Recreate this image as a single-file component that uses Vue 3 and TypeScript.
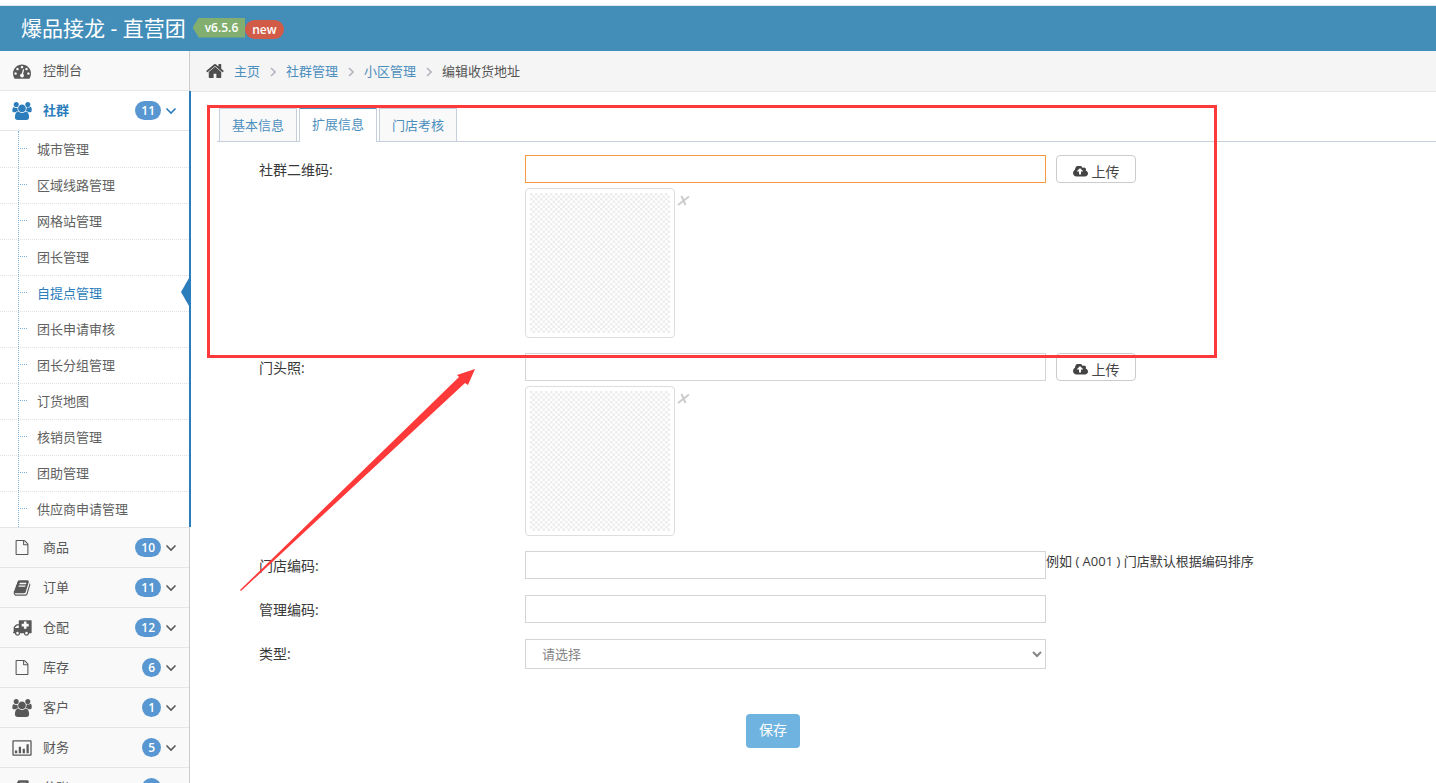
<script setup lang="ts">
import { ref } from 'vue'

interface Icon {
  box: string
  d: string
}

interface MenuItem {
  label: string
  icon: keyof typeof icons
  count?: number
  children?: string[]
}

interface Field {
  id: string
  label: string
  kind: 'upload' | 'text' | 'select'
  hint?: string
}

const icons = {
  gauge: {
    box: '0 0 1792 1792',
    d: 'M384 1152q0-53-37.5-90.5t-90.5-37.5-90.5 37.5-37.5 90.5 37.5 90.5 90.5 37.5 90.5-37.5 37.5-90.5zm192-448q0-53-37.5-90.5t-90.5-37.5-90.5 37.5-37.5 90.5 37.5 90.5 90.5 37.5 90.5-37.5 37.5-90.5zm428 481l101-382q6-26-7.5-48.5t-38.5-29.5-48 6.5-30 39.5l-101 382q-60 5-107 43.5t-63 98.5q-20 77 20 146t117 89 146-20 89-117q16-60-6-117t-72-91zm660-33q0-53-37.5-90.5t-90.5-37.5-90.5 37.5-37.5 90.5 37.5 90.5 90.5 37.5 90.5-37.5 37.5-90.5zm-640-640q0-53-37.5-90.5t-90.5-37.5-90.5 37.5-37.5 90.5 37.5 90.5 90.5 37.5 90.5-37.5 37.5-90.5zm448 192q0-53-37.5-90.5t-90.5-37.5-90.5 37.5-37.5 90.5 37.5 90.5 90.5 37.5 90.5-37.5 37.5-90.5zm320 448q0 261-141 483-19 29-54 29h-1402q-35 0-54-29-141-221-141-483 0-182 71-348t191-286 286-191 348-71 348 71 286 191 191 286 71 348z',
  },
  users: {
    box: '-64 0 1920 1792',
    d: 'M529 896q-162 5-265 128h-134q-82 0-138-40.5t-56-118.5q0-353 124-353 6 0 43.5 21t97.5 42.5 119 21.5q67 0 133-23-5 37-5 66 0 159 93 294zm1071 637q0 120-73 189.5t-194 69.5h-874q-121 0-194-69.5t-73-189.5q0-53 3.5-103.5t14-109 26.5-108.5 43-97.5 62-81 85.5-53.5 111.5-20q10 0 43 21.5t73 48 107 48 135 21.5 135-21.5 107-48 73-48 43-21.5q61 0 111.5 20t85.5 53.5 62 81 43 97.5 26.5 108.5 14 109 3.5 103.5zm-1024-1277q0 106-75 181t-181 75-181-75-75-181 75-181 181-75 181 75 75 181zm704 384q0 159-112.5 271.5t-271.5 112.5-271.5-112.5-112.5-271.5 112.5-271.5 271.5-112.5 271.5 112.5 112.5 271.5zm576 225q0 78-56 118.5t-138 40.5h-134q-103-123-265-128 93-135 93-294 0-29-5-66 66 23 133 23 59 0 119-21.5t97.5-42.5 43.5-21q124 0 124 353zm-128-609q0 106-75 181t-181 75-181-75-75-181 75-181 181-75 181 75 75 181z',
  },
  file: {
    box: '0 0 1792 1792',
    d: 'M1596 380q28 28 48 76t20 88v1152q0 40-28 68t-68 28h-1344q-40 0-68-28t-28-68v-1600q0-40 28-68t68-28h896q40 0 88 20t76 48zm-444-244v376h376q-10-29-22-41l-313-313q-12-12-41-22zm384 1528v-1024h-416q-40 0-68-28t-28-68v-416h-768v1536h1280z',
  },
  book: {
    box: '0 0 1792 1792',
    d: 'M1703 478q40 57 18 129l-275 906q-19 64-76.5 107.5t-122.5 43.5h-923q-77 0-148.5-53.5t-99.5-131.5q-24-67-2-127 0-4 3-27t4-37q1-8-3-21.5t-3-19.5q2-11 8-21t16.5-23.5 16.5-23.5q23-38 45-91.5t30-91.5q3-10 .5-30t-.5-28q3-11 17-28t17-23q21-36 42-92t25-90q1-9-2.5-32t.5-28q4-13 22-30.5t22-22.5q19-26 42.5-84.5t27.5-96.5q1-8-3-25.5t-2-26.5q2-8 9-18t18-23 17-21q8-12 16.5-30.5t15-35 16-36 19.5-32 26.5-23.5 36-11.5 47.5 5.5l-1 3q38-9 51-9h761q74 0 114 56t18 130l-274 906q-36 119-71.5 153.5t-128.5 34.5h-869q-27 0-38 15-11 16-1 43 24 70 144 70h923q29 0 56-15.5t35-41.5l300-987q7-22 5-57 38 15 59 43zm-1064 2q-4 13 2 22.5t20 9.5h608q13 0 25.5-9.5t16.5-22.5l21-64q4-13-2-22.5t-20-9.5h-608q-13 0-25.5 9.5t-16.5 22.5zm-83 256q-4 13 2 22.5t20 9.5h608q13 0 25.5-9.5t16.5-22.5l21-64q4-13-2-22.5t-20-9.5h-608q-13 0-25.5 9.5t-16.5 22.5z',
  },
  ambulance: {
    box: '0 0 1920 1792',
    d: 'M1920 192v1152q0 26-19 45t-45 19h-192q0 106-75 181t-181 75-181-75-75-181h-384q0 106-75 181t-181 75-181-75-75-181h-128q-26 0-45-19t-19-45 19-45 45-19v-416q0-26 13-58t32-51l198-198q19-19 51-32t58-13h160v-320q0-26 19-45t45-19h1152q26 0 45 19t19 45zM640 1408a128 128 0 1 0-256 0a128 128 0 1 0 256 0zM1536 1408a128 128 0 1 0-256 0a128 128 0 1 0 256 0zM256 896h384v-256h-158q-14 2-22 9l-195 195q-7 12-9 22zM1408 256h-256v224h-224v256h224v224h256v-224h224v-256h-224z',
  },
  chart: {
    box: '0 0 1920 1792',
    d: 'M96 128h1728q96 0 96 96v1344q0 96-96 96h-1728q-96 0-96-96v-1344q0-96 96-96zM128 256v1280h1664v-1280zM256 1152h224v256h-224zM640 768h224v640h-224zM1024 960h224v448h-224zM1408 512h224v896h-224z',
  },
  home: {
    box: '64 192 1664 1408',
    d: 'M1472 992v480q0 26-19 45t-45 19h-384v-384h-256v384h-384q-26 0-45-19t-19-45v-480q0-1 .5-3t.5-3l575-474 575 474q1 2 1 6zm223-69l-62 74q-8 9-21 11h-3q-13 0-21-7l-692-577-692 577q-12 8-24 7-13-2-21-11l-62-74q-8-10-7-23.5t11-21.5l719-599q32-26 76-26t76 26l244 204v-195q0-14 9-23t23-9h192q14 0 23 9t9 23v408l219 182q10 8 11 21.5t-7 23.5z',
  },
  cloud: {
    box: '-64 256 1920 1280',
    d: 'M1216 864q0-14-9-23l-352-352q-9-9-23-9t-23 9l-351 351q-10 12-10 24 0 14 9 23t23 9h224v352q0 13 9.5 22.5t22.5 9.5h192q13 0 22.5-9.5t9.5-22.5v-352h224q13 0 22.5-9.5t9.5-22.5zm640 288q0 159-112.5 271.5t-271.5 112.5h-1088q-185 0-316.5-131.5t-131.5-316.5q0-130 70-240t188-165q-2-30-2-43 0-212 150-362t362-150q156 0 285.5 87t188.5 231q71-62 166-62 106 0 181 75t75 181q0 76-41 138 130 31 213.5 135.5t83.5 238.5z',
  },
} satisfies Record<string, Icon>

const menu: MenuItem[] = [
  { label: '控制台', icon: 'gauge' },
  {
    label: '社群',
    icon: 'users',
    count: 11,
    children: [
      '城市管理',
      '区域线路管理',
      '网格站管理',
      '团长管理',
      '自提点管理',
      '团长申请审核',
      '团长分组管理',
      '订货地图',
      '核销员管理',
      '团助管理',
      '供应商申请管理',
    ],
  },
  { label: '商品', icon: 'file', count: 10 },
  { label: '订单', icon: 'book', count: 11 },
  { label: '仓配', icon: 'ambulance', count: 12 },
  { label: '库存', icon: 'file', count: 6 },
  { label: '客户', icon: 'users', count: 1 },
  { label: '财务', icon: 'chart', count: 5 },
  { label: '分账', icon: 'book', count: 4 },
]

const currentPage = '自提点管理'
const crumbs = ['主页', '社群管理', '小区管理']
const tabs = ['基本信息', '扩展信息', '门店考核']
const activeTab = ref('扩展信息')

const fields: Field[] = [
  { id: 'qrcode', label: '社群二维码', kind: 'upload' },
  { id: 'storefront', label: '门头照', kind: 'upload' },
  { id: 'shop-code', label: '门店编码', kind: 'text', hint: '例如 ( A001 ) 门店默认根据编码排序' },
  { id: 'manage-code', label: '管理编码', kind: 'text' },
  { id: 'kind', label: '类型', kind: 'select' },
]
const focusedField = ref('qrcode')
</script>

<template>
  <div class="page">
    <header class="navbar">
      <a href="#" class="brand">爆品接龙 - 直营团</a>
      <span class="version">v6.5.6</span>
      <span class="new">new</span>
    </header>

    <div class="body">
      <nav class="sidebar">
        <ul class="menu">
          <li v-for="item in menu" :key="item.label" class="entry" :class="{ open: item.children }">
            <a href="#" class="entry-link">
              <svg class="entry-icon" :class="item.icon" :viewBox="icons[item.icon].box" aria-hidden="true">
                <path fill-rule="evenodd" :d="icons[item.icon].d" />
              </svg>
              <span class="entry-label">{{ item.label }}</span>
              <template v-if="item.count">
                <span class="badge">{{ item.count }}</span>
                <svg class="caret" viewBox="0 0 10 6" aria-hidden="true"><path d="M0.5 0.5L5 5L9.5 0.5" /></svg>
              </template>
            </a>
            <ul v-if="item.children" class="submenu">
              <li v-for="child in item.children" :key="child" :class="{ current: child === currentPage }">
                <a href="#">{{ child }}</a>
              </li>
            </ul>
          </li>
        </ul>
      </nav>

      <main class="main">
        <nav class="breadcrumb">
          <svg class="home" :viewBox="icons.home.box" aria-hidden="true"><path :d="icons.home.d" /></svg>
          <template v-for="crumb in crumbs" :key="crumb">
            <a href="#">{{ crumb }}</a>
            <svg class="sep" viewBox="0 0 6 10" aria-hidden="true"><path d="M1 1L5 5L1 9" /></svg>
          </template>
          <span>编辑收货地址</span>
        </nav>

        <div class="tabs" role="tablist">
          <button
            v-for="tab in tabs"
            :key="tab"
            type="button"
            role="tab"
            class="tab"
            :class="{ active: tab === activeTab }"
            :aria-selected="tab === activeTab"
            @click="activeTab = tab"
          >
            {{ tab }}
          </button>
        </div>

        <form class="form" @submit.prevent>
          <div v-for="field in fields" :key="field.id" class="row">
            <label :for="field.id">{{ field.label }}:</label>
            <div class="control">
              <select v-if="field.kind === 'select'" :id="field.id" class="select">
                <option>请选择</option>
              </select>
              <input
                v-else
                :id="field.id"
                type="text"
                class="input"
                :class="{ focused: field.id === focusedField }"
                @focus="focusedField = field.id"
              />
              <div v-if="field.kind === 'upload'" class="preview">
                <div class="thumb">
                  <svg class="checker" aria-hidden="true">
                    <defs>
                      <pattern :id="`${field.id}-checker`" width="5" height="5" patternUnits="userSpaceOnUse">
                        <path d="M0 0h2.5v5h2.5v-2.5h-5z" fill="#ededed" />
                      </pattern>
                    </defs>
                    <rect width="100%" height="100%" :fill="`url(#${field.id}-checker)`" />
                  </svg>
                </div>
                <button type="button" class="remove" aria-label="删除">
                  <svg viewBox="0 0 13 11" aria-hidden="true"><path d="M1 10L12 1.5M4.5 1L8.5 10" /></svg>
                </button>
              </div>
            </div>
            <div class="extra">
              <button v-if="field.kind === 'upload'" type="button" class="upload">
                <svg :viewBox="icons.cloud.box" aria-hidden="true"><path :d="icons.cloud.d" /></svg>
                上传
              </button>
              <span v-if="field.hint" class="hint">{{ field.hint }}</span>
            </div>
          </div>
          <div class="actions">
            <button type="submit" class="save">保存</button>
          </div>
        </form>
      </main>
    </div>

    <div class="highlight"></div>
    <svg class="arrow" viewBox="0 0 236 222" aria-hidden="true">
      <path d="M235 0L217 6L219 8L0 221L1 222L225 14L228 16Z" />
    </svg>
  </div>
</template>

<style>
body {
  margin: 0;
}
</style>

<style scoped>
.page {
  position: relative;
  display: flex;
  flex-direction: column;
  height: 100vh;
  overflow: hidden;
  box-sizing: border-box;
  border-top: 5px solid #fff;
  background: #fff;
  color: #393939;
  font: 13px/20px 'Open Sans', 'Noto Sans CJK SC', sans-serif;
}

ul {
  margin: 0;
  padding: 0;
  list-style: none;
}

a {
  text-decoration: none;
}

button,
input,
select {
  box-sizing: border-box;
  margin: 0;
  font: inherit;
}

.navbar {
  display: flex;
  flex: none;
  align-items: center;
  height: 45px;
  padding-left: 21px;
  border-top: 1px solid #dfe7ec;
  background: #438eb9;
  color: #fff;
}

.brand {
  padding-bottom: 2px;
  color: #fff;
  font-size: 21px;
  line-height: 42px;
}

.version,
.new {
  font-size: 12px;
  font-weight: 600;
}

.version {
  margin-left: 7px;
  margin-bottom: 2px;
  padding: 0 7px 0 12px;
  background: #82af6f;
  clip-path: polygon(0 50%, 6px 0, 100% 0, 100% 100%, 6px 100%);
  line-height: 20px;
}

.new {
  margin-top: 2px;
  padding: 0 7px;
  border-radius: 10px;
  background: #d15b47;
  line-height: 19px;
}

.body {
  display: flex;
  flex: 1;
  min-height: 0;
}

.sidebar {
  flex: none;
  box-sizing: border-box;
  width: 190px;
  border-right: 1px solid #ccc;
  background: #f2f2f2;
}

.entry {
  position: relative;
}

.entry-link {
  display: flex;
  align-items: center;
  box-sizing: border-box;
  height: 40px;
  padding: 0 13px 0 12px;
  border-bottom: 1px solid #e5e5e5;
  background: #f9f9f9;
  color: #585858;
}

.open ~ .entry .entry-link {
  border-top: 1px solid #e5e5e5;
  border-bottom: 0;
}

.entry-icon {
  width: 20px;
  height: 18px;
  margin-right: 11px;
  fill: currentColor;
}

.entry-icon.file {
  height: 15px;
}

.entry-label {
  flex: 1;
  padding-bottom: 2px;
}

.badge {
  padding: 0 6px;
  border-radius: 10px;
  background: #5897d1;
  color: #fff;
  font-size: 12px;
  font-weight: 600;
  line-height: 19px;
}

.caret {
  width: 10px;
  height: 6px;
  margin-left: 5px;
  fill: none;
  stroke: currentColor;
  stroke-width: 1.6;
  overflow: visible;
}

.open .entry-link {
  background: #fff;
  color: #2b7dbc;
  font-weight: 700;
}

.open::after {
  position: absolute;
  top: 0;
  right: -2px;
  bottom: 0;
  width: 2px;
  background: #2b7dbc;
  content: '';
}

.submenu {
  position: relative;
  background: #fff;
}

.submenu::before {
  position: absolute;
  top: 0;
  bottom: 0;
  left: 18px;
  z-index: 1;
  border-left: 1px dotted #7fb1d8;
  content: '';
}

.submenu li {
  position: relative;
}

.submenu li::before {
  position: absolute;
  top: 17px;
  left: 20px;
  width: 7px;
  border-top: 1px dotted #7fb1d8;
  content: '';
}

.submenu a {
  display: block;
  box-sizing: border-box;
  height: 36px;
  padding-left: 37px;
  border-top: 1px dotted #e0e0e0;
  color: #616161;
  line-height: 34px;
}

.submenu li:first-child a {
  border-top-color: transparent;
}

.submenu .current a {
  color: #2b7dbc;
}

.submenu .current::after {
  position: absolute;
  top: 3px;
  right: 0;
  width: 8px;
  height: 28px;
  background: #2b7dbc;
  clip-path: polygon(100% 0, 0 50%, 100% 100%);
  content: '';
}

.main {
  flex: 1;
  min-width: 0;
}

.breadcrumb {
  display: flex;
  align-items: center;
  height: 40px;
  padding-left: 16px;
  border-bottom: 1px solid #e5e5e5;
  background: #f5f5f5;
  color: #555;
}

.breadcrumb a,
.breadcrumb span {
  padding-bottom: 1px;
}

.breadcrumb a {
  color: #4c8fbd;
}

.home {
  width: 18px;
  height: 16px;
  margin-right: 10px;
  fill: #4e4e4e;
}

.sep {
  width: 6px;
  height: 10px;
  margin: 2px 10px 0;
  fill: none;
  stroke: #b2b6bf;
  stroke-width: 1.6;
}

.tabs {
  display: flex;
  align-items: flex-end;
  gap: 2px;
  margin: 15px 0 0 27px;
  padding-left: 2px;
  border-bottom: 1px solid #c5d0dc;
}

.tab {
  height: 33px;
  padding: 0 12px 1px;
  border: 1px solid #c5d0dc;
  border-bottom: 0;
  background: #f9f9f9;
  color: #4c8fbd;
}

.tab.active {
  height: 35px;
  margin-bottom: -1px;
  padding-bottom: 3px;
  border-top: 2px solid #4c8fbd;
  background: #fff;
}

.form {
  display: flex;
  flex-direction: column;
  gap: 15px;
  padding: 13px 0 0 69px;
}

.row {
  display: grid;
  grid-template-columns: 266px minmax(0, 521fr) minmax(0, 390fr);
  min-height: 29px;
}

.row label {
  font-size: 14px;
  line-height: 29px;
}

.input,
.select {
  display: block;
  width: 100%;
  height: 28px;
  border: 1px solid #d5d5d5;
  border-radius: 0;
  outline: 0;
  background: #fff;
  color: #858585;
}

.input {
  padding: 4px 6px;
}

.input.focused {
  border-color: #f59942;
}

.select {
  height: 30px;
  padding-left: 12px;
}

.preview {
  display: flex;
  align-items: flex-start;
  margin-top: 5px;
}

.thumb {
  padding: 4px;
  border: 1px solid #ddd;
  border-radius: 4px;
}

.checker {
  display: block;
  width: 140px;
  height: 140px;
}

.remove {
  padding: 7px 2px;
  border: 0;
  background: none;
  line-height: 0;
}

.remove svg {
  width: 13px;
  height: 11px;
  fill: none;
  stroke: #ccc;
  stroke-width: 2;
}

.upload {
  display: flex;
  align-items: center;
  justify-content: center;
  gap: 4px;
  width: 80px;
  height: 28px;
  margin-left: 10px;
  padding: 5px 0 0;
  border: 1px solid #ccc;
  border-radius: 4px;
  background: #fff;
  color: #444;
  font-size: 14px;
}

.upload svg {
  width: 15px;
  height: 11px;
  fill: currentColor;
}

.hint {
  display: block;
  white-space: nowrap;
}

.actions {
  padding: 30px 0 0 487px;
}

.save {
  height: 34px;
  padding: 0 13px 2px;
  border: 0;
  border-radius: 4px;
  background: #6fb3e0;
  color: #fff;
  font-size: 14px;
}

.highlight {
  position: absolute;
  top: 100px;
  left: 207px;
  box-sizing: border-box;
  width: 1010px;
  height: 253px;
  border: 3px solid #fd3939;
  pointer-events: none;
}

.arrow {
  position: absolute;
  top: 364px;
  left: 240px;
  width: 236px;
  height: 222px;
  fill: #fd3939;
  pointer-events: none;
}
</style>
